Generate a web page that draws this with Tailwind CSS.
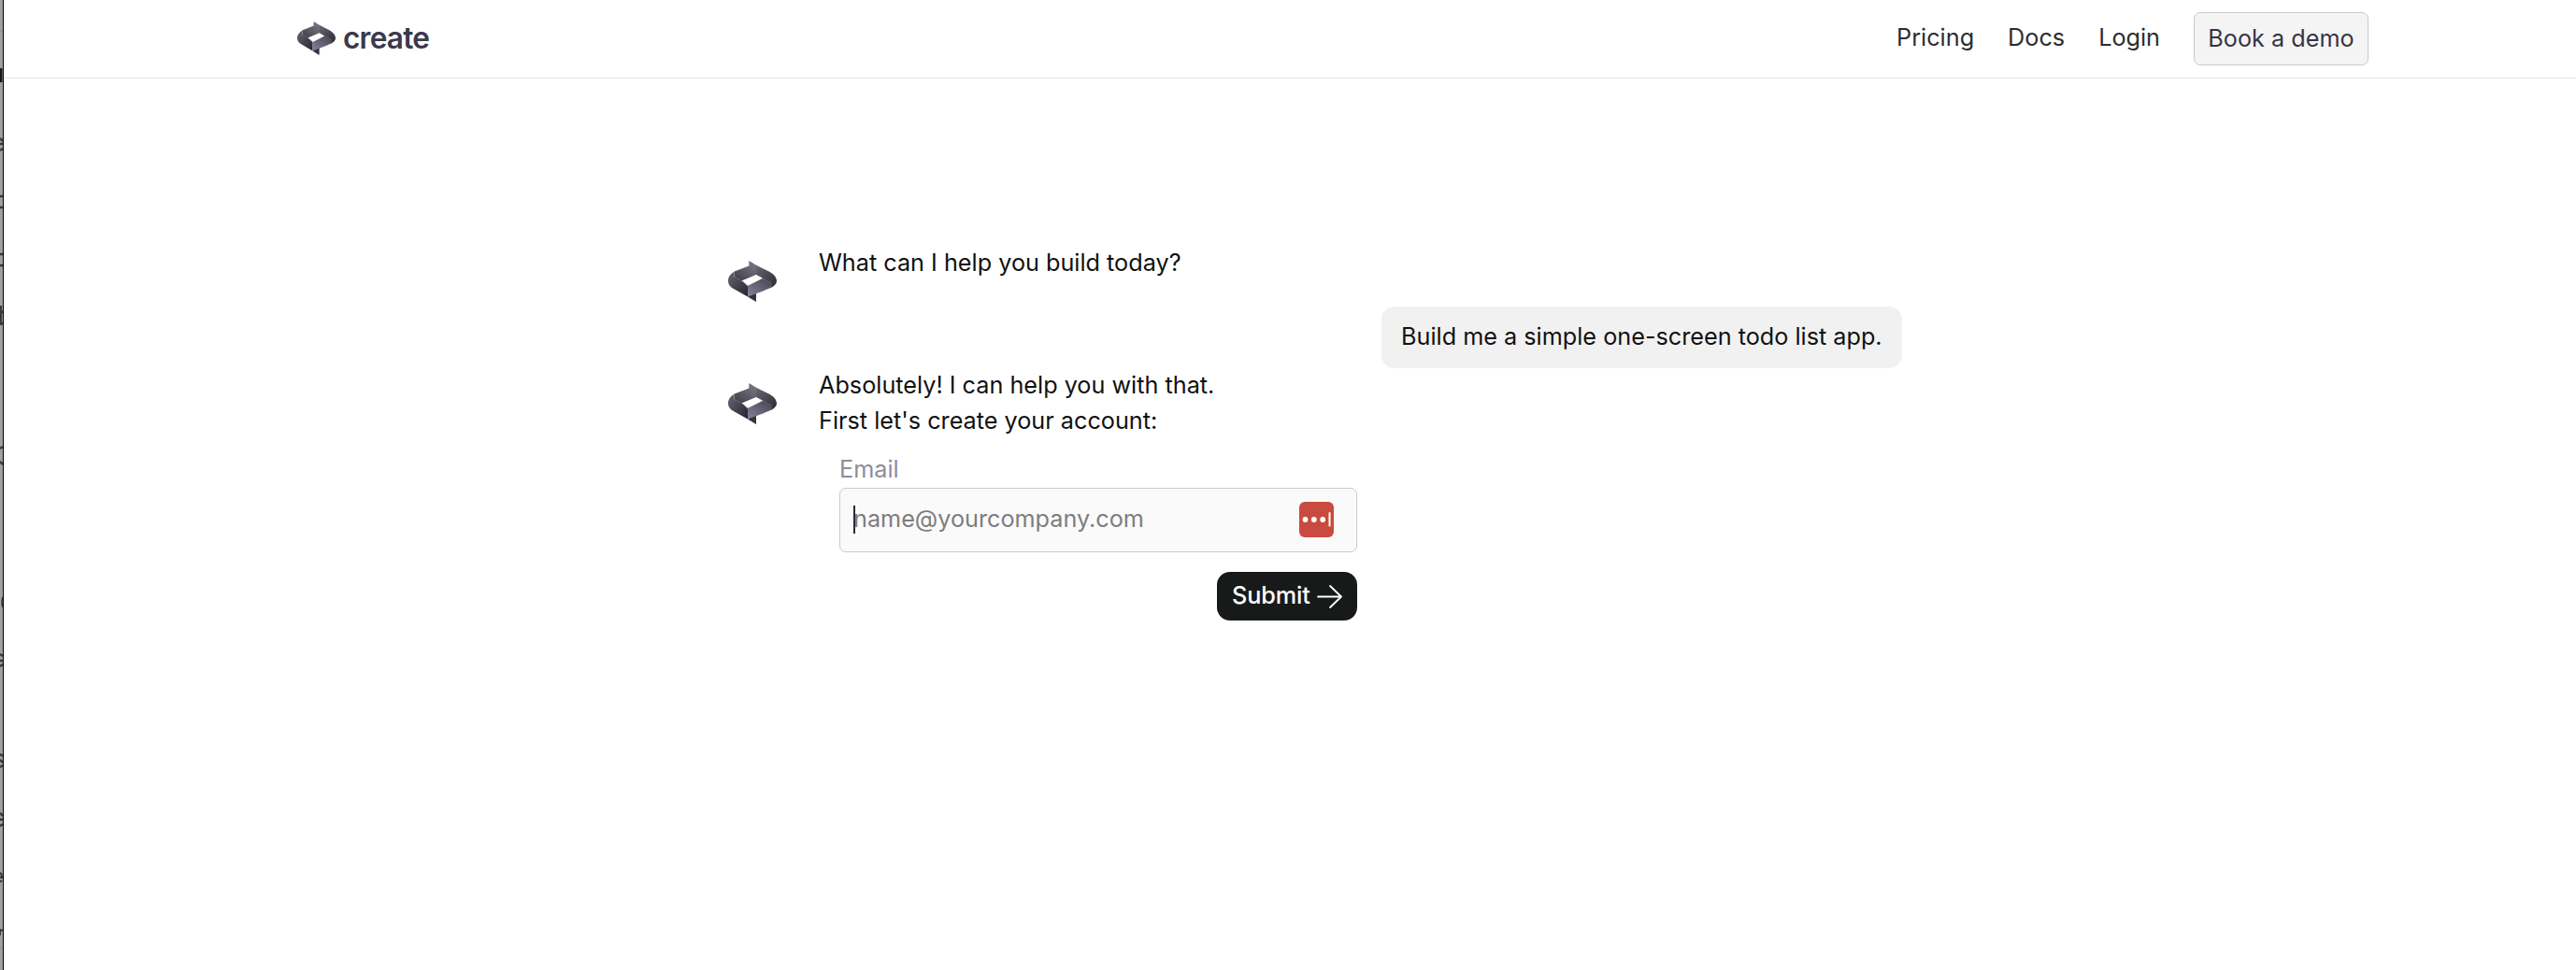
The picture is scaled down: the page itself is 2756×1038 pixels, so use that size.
<!DOCTYPE html>
<html lang="en">
<head>
    <meta charset="UTF-8">
    <meta name="viewport" content="width=device-width, initial-scale=1.0">
    <title>Create</title>
    <script src="https://cdn.jsdelivr.net/npm/@tailwindcss/browser@4"></script>
</head>
<body class="flex h-screen overflow-hidden bg-white font-['Inter',sans-serif] text-[25.22px] leading-[38px] text-[#111111]">
    <!-- Shared logo mark -->
    <svg class="absolute w-0 h-0" aria-hidden="true">
        <defs>
            <linearGradient id="top" x1="0" y1="1" x2="1" y2="0">
                <stop offset="0" stop-color="#3d3c47"/><stop offset="1" stop-color="#777583"/>
            </linearGradient>
            <linearGradient id="right" x1="0" y1="0" x2="1" y2="1">
                <stop offset="0" stop-color="#686674"/><stop offset="1" stop-color="#2b2a32"/>
            </linearGradient>
            <linearGradient id="left" x1="0" y1="0" x2="1" y2="1">
                <stop offset="0" stop-color="#686674"/><stop offset="1" stop-color="#25242c"/>
            </linearGradient>
            <linearGradient id="bottom" x1="0" y1="1" x2="1" y2="0">
                <stop offset="0" stop-color="#85829a"/><stop offset="1" stop-color="#444250"/>
            </linearGradient>
        </defs>
        <symbol id="mark" viewBox="0 0 156 133" preserveAspectRatio="none">
            <path d="M67 0 91 15V48L67 44Z" fill="#706e7c"/>
            <path d="M66 103 90 96V133L64 117Z" fill="#34333c"/>
            <path d="M20 35 67 17 90 14 91 46 45 65 22 60Z" fill="url(#top)"/>
            <path d="M90 14 134 36C149 45 156 56 156 66 156 75 149 81 139 87L109 57 90 46Z" fill="url(#right)"/>
            <path d="M20 35C6 44 0 54 0 66 0 77 6 84 16 90L63 116V82L45 65 20 52Z" fill="url(#left)"/>
            <path d="M63 80 109 57 139 72 141 85C133 90 122 94 112 98L63 116Z" fill="url(#bottom)"/>
            <path d="M44 65 90 45 111 57 66 79Z" fill="#fff"/>
            <path d="M20 53 44 65 64 79M111 57 139 72" fill="none" stroke="#8a8896" stroke-width="1.2"/>
        </symbol>
    </svg>

    <!-- Edge of the window behind -->
    <div class="w-1 shrink-0 border-r border-black bg-[#a1a19c]">
        <svg class="block" width="3" height="1038" viewBox="0 0 3 1038" fill="none" stroke="#3a3a37" stroke-width="2.6">
            <path d="M0 33H3M0 1015H3" stroke="#8b8b87" stroke-width="1"/>
            <path d="M0 73H2.4V88H0Z" fill="#171715" stroke="none"/>
            <path d="M0 148 3 151M0 154H3M0 161 3 159"/>
            <path d="M0 210H3M0 222H3M0 272H3M0 284H3"/>
            <path d="M.8 327V348M1 335 3 333M1 345 3 347"/>
            <path d="M0 480 3 478M0 494 3 497"/>
            <path d="M3 639Q1 644 3 650" stroke-width="1.6"/>
            <path d="M0 700 3 702M0 707H3M0 713 3 711"/>
            <path d="M0 807 3 809M0 813 3 816M0 821 3 819"/>
            <path d="M0 870 3 873M0 877H3M0 884 3 882"/>
            <path d="M0 934Q2 935 2 939H0M0 944 2 942" stroke-width="2"/>
            <path d="M0 994V1001M1 996 3 995" stroke-width="2"/>
        </svg>
    </div>

    <div class="flex-1">
        <!-- Navigation -->
        <header class="flex h-[84px] items-center justify-between border-b border-[#e6e6e6] pl-[314px] pr-[222px]">
            <a href="#" class="flex items-center gap-2">
                <svg class="h-9 w-[41px] -mt-0.5"><use href="#mark"/></svg>
                <span class="-mt-0.5 text-[31.6px] font-semibold tracking-tight text-[#3b394b]">create</span>
            </a>
            <nav class="flex items-center gap-9 text-[#2d2d30]">
                <a href="#" class="-mt-[3px]">Pricing</a>
                <a href="#" class="-mt-[3px]">Docs</a>
                <a href="#" class="-mt-[3px]">Login</a>
                <a href="#" class="flex h-[57px] w-[187px] items-center justify-center rounded-[7px] border border-[#c9c9c9] bg-[#f4f4f4] pb-px text-[#363446]">Book a demo</a>
            </nav>
        </header>

        <!-- Chat -->
        <main class="ml-[775px] w-[1256px] pt-[178px]">
            <div class="flex h-[66px] gap-[45px]">
                <svg class="mt-[17px] h-11 w-[52px]"><use href="#mark"/></svg>
                <p>What can I help you build today?</p>
            </div>
            <div class="flex justify-end">
                <p class="h-[66px] w-[557px] rounded-[14px] bg-[#f1f1f1] pl-[21px] pt-[13px]">Build me a simple one-screen todo list app.</p>
            </div>
            <div class="-mt-px flex gap-[45px]">
                <svg class="mt-[17px] h-11 w-[52px]"><use href="#mark"/></svg>
                <div>
                    <p>Absolutely! I can help you with that.</p>
                    <p>First let's create your account:</p>
                    <form class="ml-[22px] mt-3.5 flex w-[554px] flex-col">
                        <label class="text-[#8e8c9c]">Email</label>
                        <div class="mt-px flex h-[69px] items-center justify-between rounded-[7px] border border-[#cbcbcb] bg-[#fafafa] pl-3.5 pr-6">
                            <div class="relative -mt-[3px] text-[#7d7d7d]">
                                name@yourcompany.com
                                <span class="absolute left-0 top-[5px] h-[30px] w-0.5 bg-[#2c2b3a]"></span>
                            </div>
                            <svg class="-mt-0.5 h-[38px] w-[37px]" viewBox="0 0 37 38">
                                <rect width="37" height="38" rx="6" fill="#c94a3e"/>
                                <g fill="#fff">
                                    <circle cx="6.5" cy="19" r="2.9"/>
                                    <circle cx="15.8" cy="19" r="2.9"/>
                                    <circle cx="25.2" cy="19" r="2.9"/>
                                    <rect x="31.5" y="11" width="2" height="15.500" rx="1"/>
                                </g>
                            </svg>
                        </div>
                        <button type="button" class="mt-[21px] flex h-[52px] w-[150px] items-center justify-between self-end rounded-[14px] bg-[#171a19] pl-4 pr-4 font-medium text-white">
                            <span class="-mt-0.5 tracking-[-0.1px]">Submit</span>
                            <svg class="h-[25px] w-[27px]" viewBox="0 0 27 25" fill="none" stroke="currentColor" stroke-width="1.8" stroke-linecap="round" stroke-linejoin="round">
                                <path d="M1 12.500H26M14 1 26 12.500 14 24"/>
                            </svg>
                        </button>
                    </form>
                </div>
            </div>
        </main>
    </div>
</body>
</html>
